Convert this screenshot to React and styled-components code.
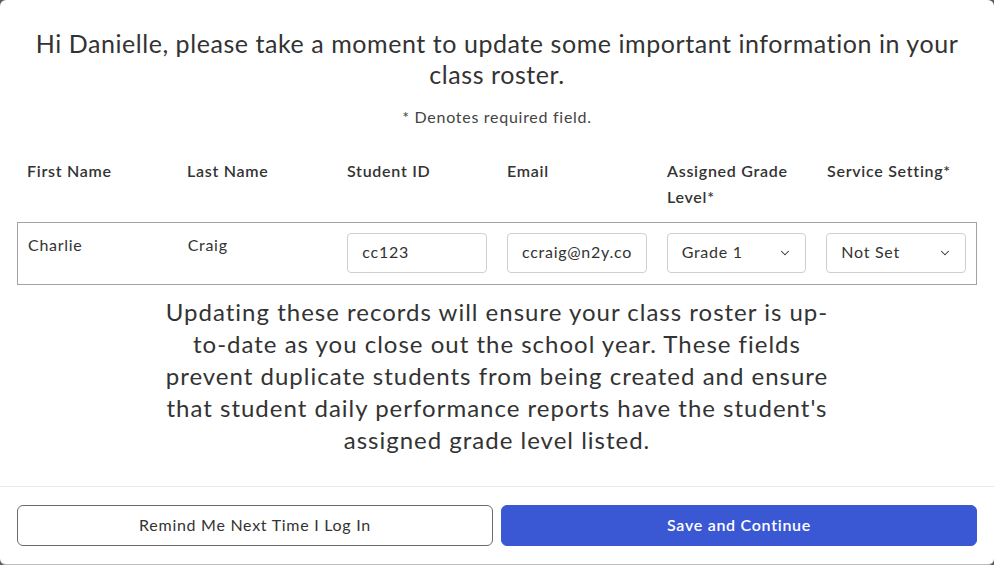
import React from "react";
import styled, { createGlobalStyle } from "styled-components";
import { ChevronDown } from "lucide-react";

const Global = createGlobalStyle`
  html, body { margin: 0; padding: 0; height: 100%; }
  body {
    background: #5c5c5c;
    font-family: Lato, "Open Sans", sans-serif;
    color: #333;
    letter-spacing: 0.72px;
  }
  * { box-sizing: border-box; }
`;

const Modal = styled.div`
  width: 994px;
  height: 565px;
  background: #fff;
  border-radius: 6px;
  display: flex;
  flex-direction: column;
  overflow: hidden;
  border-bottom: 1px solid #bdbdbd;
`;

const Body = styled.div`
  flex: 1;
  padding: 28px 17px 0;
  display: flex;
  flex-direction: column;
`;

const Title = styled.h1`
  margin: 0;
  font-size: 25px;
  font-weight: 400;
  line-height: 31px;
  letter-spacing: 0.56px;
  text-align: center;
  color: #333;
`;

const Note = styled.p`
  margin: 17px 0 0;
  font-size: 16px;
  line-height: 20px;
  text-align: center;
  color: #444;
`;

const Grid = styled.div`
  display: grid;
  grid-template-columns: repeat(6, 1fr);
  align-items: start;
`;

const HeaderRow = styled(Grid)`
  margin-top: 31px;
`;

const HeaderCell = styled.div`
  padding: 0 10px;
  font-size: 16px;
  font-weight: 600;
  line-height: 26px;
  color: #333;
`;

const DataRow = styled(Grid)`
  margin-top: 12px;
  border: 1px solid #a3a3a3;
  padding: 10px 0 11px;
`;

const Cell = styled.div`
  padding: 0 10px;
  font-size: 16px;
  line-height: 24px;
  color: #333;
`;

const Field = styled.input`
  width: 100%;
  height: 40px;
  border: 1px solid #cfcfcf;
  border-radius: 4px;
  padding: 0 14px 3px;
  font-family: inherit;
  font-size: 16px;
  letter-spacing: 0.72px;
  color: #333;
  background: #fff;
  outline: none;
`;

const SelectWrap = styled.div`
  position: relative;
  width: 100%;
`;

const Select = styled.select`
  width: 100%;
  height: 40px;
  border: 1px solid #cfcfcf;
  border-radius: 4px;
  padding: 0 30px 3px 14px;
  font-family: inherit;
  font-size: 16px;
  letter-spacing: 0.72px;
  color: #333;
  background: #fff;
  appearance: none;
  -webkit-appearance: none;
  outline: none;
`;

const Chevron = styled(ChevronDown)`
  position: absolute;
  right: 14px;
  top: 13px;
  pointer-events: none;
  color: #333;
`;

const Message = styled.p`
  margin: 11px auto 0;
  width: 680px;
  font-size: 24px;
  line-height: 32px;
  letter-spacing: 1px;
  text-align: center;
  color: #333;
`;

const Footer = styled.div`
  border-top: 1px solid #e8e8e8;
  padding: 18px 17px 18px;
  display: grid;
  grid-template-columns: 1fr 1fr;
  gap: 8px;
`;

const Button = styled.button`
  height: 41px;
  padding: 0 12px 3px;
  border-radius: 6px;
  font-family: inherit;
  font-size: 16px;
  letter-spacing: 0.72px;
  cursor: pointer;
  border: 1px solid ${(p) => (p.$primary ? "#3a58d4" : "#6b6b6b")};
  background: ${(p) => (p.$primary ? "#3a58d4" : "#fff")};
  color: ${(p) => (p.$primary ? "#fff" : "#333")};
  font-weight: ${(p) => (p.$primary ? 600 : 400)};
`;

const headers = [
  "First Name",
  "Last Name",
  "Student ID",
  "Email",
  "Assigned Grade Level*",
  "Service Setting*",
];

function Dropdown({ value, options }) {
  return (
    <SelectWrap>
      <Select defaultValue={value}>
        {options.map((o) => (
          <option key={o}>{o}</option>
        ))}
      </Select>
      <Chevron size={14} strokeWidth={1.8} />
    </SelectWrap>
  );
}

export default function App() {
  return (
    <>
      <Global />
      <Modal>
        <Body>
          <Title>
            Hi Danielle, please take a moment to update some important information in your class roster.
          </Title>
          <Note>* Denotes required field.</Note>
          <HeaderRow>
            {headers.map((h) => (
              <HeaderCell key={h}>{h}</HeaderCell>
            ))}
          </HeaderRow>
          <DataRow>
            <Cell>Charlie</Cell>
            <Cell>Craig</Cell>
            <Cell>
              <Field defaultValue="cc123" />
            </Cell>
            <Cell>
              <Field defaultValue="ccraig@n2y.com" />
            </Cell>
            <Cell>
              <Dropdown value="Grade 1" options={["Kindergarten", "Grade 1", "Grade 2", "Grade 3"]} />
            </Cell>
            <Cell>
              <Dropdown value="Not Set" options={["Not Set", "General Education", "Resource Room", "Self-Contained"]} />
            </Cell>
          </DataRow>
          <Message>
            Updating these records will ensure your class roster is up-to-date as you close out the school year.
            These fields prevent duplicate students from being created and ensure that student daily performance
            reports have the student's assigned grade level listed.
          </Message>
        </Body>
        <Footer>
          <Button>Remind Me Next Time I Log In</Button>
          <Button $primary>Save and Continue</Button>
        </Footer>
      </Modal>
    </>
  );
}
